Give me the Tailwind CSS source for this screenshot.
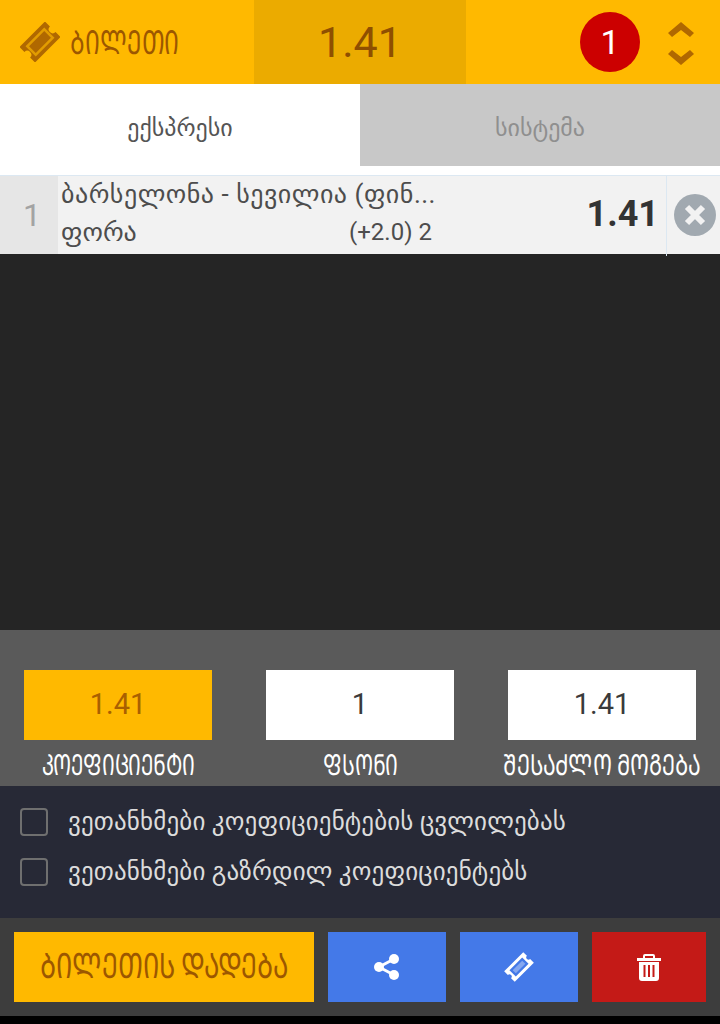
<!DOCTYPE html>
<html lang="ka">
<head>
<meta charset="utf-8">
<script src="https://cdn.jsdelivr.net/npm/@tailwindcss/browser@4"></script>
</head>
<body class="m-0 bg-black">
<div class="w-[720px] h-[1024px] flex flex-col font-['Roboto','DejaVu_Sans',sans-serif] overflow-hidden">
  <header class="h-[84px] flex bg-[#ffb900] text-[#9c5700]">
    <div class="w-[254px] flex items-center pl-[20px] gap-[10px]">
      <svg class="w-[40px] h-[40px]" viewBox="0 0 40 40"><g transform="rotate(-45 20 20)"><path fill="#b06800" d="M2 9h36v7a4 4 0 0 0 0 8v7H2v-7a4 4 0 0 0 0-8z"/><rect x="8" y="14" width="24" height="12" fill="#b06800" stroke="#e29c00" stroke-width="2.500"/></g></svg>
      <span class="text-[33px] leading-none scale-x-[.71] origin-left">ᲑᲘᲚᲔᲗᲘ</span>
    </div>
    <div class="w-[212px] bg-[#ebab00] flex items-center justify-center text-[43px] text-[#8f4f00]">1.41</div>
    <div class="flex-1 flex items-center justify-end">
      <div class="w-[60px] h-[60px] rounded-full bg-[#cc0000] text-white text-[34px] flex items-center justify-center">1</div>
      <svg class="w-[28px] h-[46px] ml-[27px] mr-[25px]" viewBox="0 0 28 46" fill="#b06800"><path d="M14 3 27 14l-4 4-9-7-9 7-4-4zM14 46 27 35l-4-4-9 7-9-7-4 4z"/></svg>
    </div>
  </header>
  <div class="h-[82px] flex text-[24px]">
    <div class="w-[360px] bg-white text-[#555] flex items-center justify-center pt-[6px]">ექსპრესი</div>
    <div class="w-[360px] bg-[#c8c8c8] text-[#8f8f8f] flex items-center justify-center pt-[6px]">სისტემა</div>
  </div>
  <div class="h-[9px] bg-white"></div>
  <div class="relative h-[79px] flex bg-[#f2f2f2] border-t border-[#dce8f2]">
    <div class="w-[58px] bg-[#e6e6e6] text-[#a3a3a3] text-[32px] flex items-center justify-center pl-[6px]">1</div>
    <div class="w-[609px] flex items-center border-r border-[#dce8f2] pl-[3px] pr-[10px]">
      <div class="flex-1 text-[#4d4d4d] text-[26px] -mt-[4px]">
        <div class="leading-[38px] tracking-[0.5px]">ბარსელონა - სევილია (ფინ...</div>
        <div class="flex leading-[38px]"><span class="w-[288px]">ფორა</span><span class="text-[24px]">(+2.0) 2</span></div>
      </div>
      <div class="text-[36px] font-bold text-[#333] mr-[-3px] -mt-[2px]">1.41</div>
    </div>
    <div class="flex-1 flex items-center justify-center pl-[2px]">
      <div class="w-[42px] h-[42px] rounded-full bg-[#a1a9b0] flex items-center justify-center">
        <svg class="w-[22px] h-[22px]" viewBox="0 0 22 22" stroke="#f2f2f2" stroke-width="6"><path d="M3 3l16 16M19 3 3 19"/></svg>
      </div>
    </div>
    <div class="absolute left-[666px] top-[77px] w-px h-[3px] bg-[#dce8f2]"></div>
  </div>
  <div class="h-[376px] bg-[#252525]"></div>
  <div class="h-[156px] bg-[#5a5a5a] pt-[40px] px-[24px]">
    <div class="flex justify-between">
      <div class="w-[188px] h-[70px] bg-[#ffb900] text-[#a96000] text-[29px] flex items-center justify-center">1.41</div>
      <div class="w-[188px] h-[70px] bg-white text-[#3a3a3a] text-[29px] flex items-center justify-center">1</div>
      <div class="w-[188px] h-[70px] bg-white text-[#3a3a3a] text-[29px] flex items-center justify-center">1.41</div>
    </div>
    <div class="flex justify-between mt-[6px] text-white text-[29px] leading-[38px] whitespace-nowrap">
      <div class="w-[188px] flex justify-center"><span class="scale-x-[.695]">ᲙᲝᲔᲤᲘᲪᲘᲔᲜᲢᲘ</span></div>
      <div class="w-[188px] flex justify-center"><span class="scale-x-[.695]">ᲤᲡᲝᲜᲘ</span></div>
      <div class="w-[188px] flex justify-center"><span class="scale-x-[.73]">ᲨᲔᲡᲐᲫᲚᲝ ᲛᲝᲒᲔᲑᲐ</span></div>
    </div>
  </div>
  <div class="h-[132px] bg-[#272936] pt-[22px] pl-[20px] flex flex-col gap-[22px] text-[#dcdcdc] text-[25px] tracking-[0.15px]">
    <div class="flex items-center h-[28px] gap-[20px]"><span class="w-[28px] h-[28px] rounded-[4px] border-2 border-[#6f6f6f]"></span><span>ვეთანხმები კოეფიციენტების ცვლილებას</span></div>
    <div class="flex items-center h-[28px] gap-[20px]"><span class="w-[28px] h-[28px] rounded-[4px] border-2 border-[#6f6f6f]"></span><span>ვეთანხმები გაზრდილ კოეფიციენტებს</span></div>
  </div>
  <div class="h-[98px] bg-[#3d3d3d] flex items-center pl-[14px] gap-[14px]">
    <div class="w-[300px] h-[70px] bg-[#ffb900] text-[#9c5700] text-[35px] flex items-center justify-center whitespace-nowrap"><span class="scale-x-[.735]">ᲑᲘᲚᲔᲗᲘᲡ ᲓᲐᲓᲔᲑᲐ</span></div>
    <div class="w-[118px] h-[70px] bg-[#4479e8] flex items-center justify-center">
      <svg class="w-[26px] h-[26px]" viewBox="0 0 26 26" fill="white"><circle cx="5" cy="13" r="5"/><circle cx="20" cy="5" r="5"/><circle cx="20" cy="21" r="5"/><path d="M5 13 20 5M5 13l15 8" stroke="white" stroke-width="3"/></svg>
    </div>
    <div class="w-[118px] h-[70px] bg-[#4479e8] flex items-center justify-center">
      <svg class="w-[30px] h-[30px]" viewBox="0 0 40 40"><g transform="rotate(-45 20 20)" fill="white"><path fill-rule="evenodd" d="M2 10h36v7a3 3 0 0 0 0 6v7H2v-7a3 3 0 0 0 0-6z M8 14v12h24V14z"/><rect x="11" y="17" width="18" height="6" opacity=".35"/></g></svg>
    </div>
    <div class="w-[114px] h-[70px] bg-[#c41a17] flex items-center justify-center">
      <svg class="w-[24px] h-[27px]" viewBox="0 0 24 27" fill="white"><path fill-rule="evenodd" d="M8 0h8a2 2 0 0 1 2 2v2h6v3H0V4h6V2a2 2 0 0 1 2-2zm0 2v2h8V2z"/><path fill-rule="evenodd" d="M2 8h20v16a3 3 0 0 1-3 3H5a3 3 0 0 1-3-3zm4.500 3v12h2V11zm4.500 0v12h2V11zm4.500 0v12h2V11z"/></svg>
    </div>
  </div>
  <div class="flex-1 bg-black"></div>
</div>
</body>
</html>
